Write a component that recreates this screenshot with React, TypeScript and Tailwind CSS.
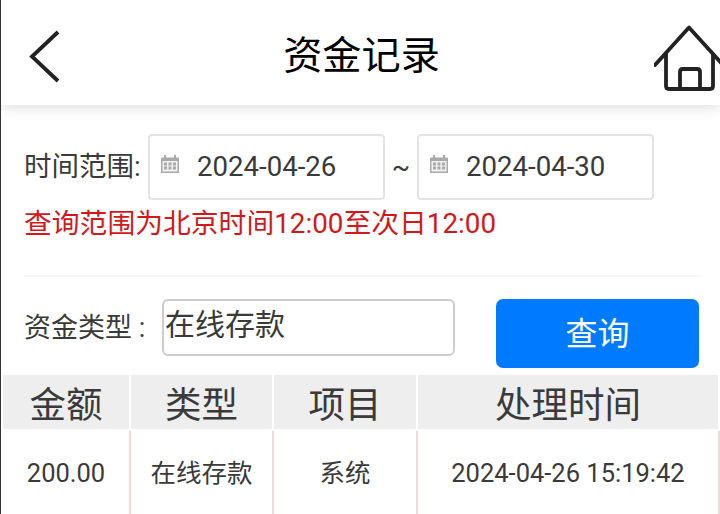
const font = "font-['Roboto','Noto_Sans_CJK_SC',sans-serif]"

function CalendarIcon() {
  return (
    <svg width="20" height="20" viewBox="0 0 20 20" className="mt-[-7px] shrink-0">
      <path d="M1 4.5a1 1 0 0 1 1-1h16a1 1 0 0 1 1 1V19H1z" fill="#aaaaaa" />
      <rect x="4" y="1" width="2" height="4" fill="#aaaaaa" />
      <rect x="14" y="1" width="2" height="4" fill="#aaaaaa" />
      <rect x="2.5" y="7" width="15" height="10.5" fill="#f1f1f1" />
      {[4, 8.5, 13].map((x) =>
        [8.5, 12.5].map((y) => <rect key={`${x}-${y}`} x={x} y={y} width="3" height="3" fill="#aaaaaa" />),
      )}
    </svg>
  )
}

function DateBox({ value }: { value: string }) {
  return (
    <div className="flex h-[66px] w-[237px] items-center rounded-[4px] border-2 border-[#e3e3e3] pl-[10px]">
      <CalendarIcon />
      <span className="ml-[17px] text-[27.6px] text-[#3a3a3a]">{value}</span>
    </div>
  )
}

const heads = ['金额', '类型', '项目', '处理时间']
const cells = ['200.00', '在线存款', '系统', '2024-04-26 15:19:42']
const cols = 'grid grid-cols-[128px_143px_144px_1fr]'

export default function App() {
  return (
    <div className={`${font} h-[514px] w-[720px] overflow-hidden border-l border-[#333333] bg-white`}>
      {/* header */}
      <header className="relative flex h-[105px] items-center justify-between bg-white shadow-[0_2px_14px_rgba(0,0,0,0.14)]">
        <svg width="40" height="60" viewBox="0 0 40 60" className="ml-[24px] mt-[13px]">
          <path d="M33 3 L7 27.5 L33 52" fill="none" stroke="#222222" strokeWidth="3.8" />
        </svg>
        <h1 className="absolute inset-x-0 top-[30px] pl-[2px] text-center text-[39.2px] leading-[52px] text-black">资金记录</h1>
        <svg width="66" height="68" viewBox="0 0 66 68" className="mt-[11px]">
          <path d="M1 41 L35 3.5 L69 41" fill="none" stroke="#222222" strokeWidth="3.8" strokeLinejoin="round" strokeLinecap="round" />
          <path d="M12 29 V62 Q12 65 15 65 H56 Q59 65 59 62 V29" fill="none" stroke="#222222" strokeWidth="3.8" />
          <path d="M26 65 V48 Q26 45 29 45 H43 Q46 45 46 48 V65" fill="none" stroke="#222222" strokeWidth="3.8" />
        </svg>
      </header>

      {/* date range */}
      <section className="ml-[23px] mr-[20px] mt-[29px] border-b-2 border-[#f6f6f6] pb-[29px]">
        <div className="flex items-center">
          <span className="w-[124px] text-[27.5px] text-[#3a3a3a]">时间范围:</span>
          <DateBox value="2024-04-26" />
          <span className="w-[32px] text-center text-[27px] text-[#3a3a3a]">~</span>
          <DateBox value="2024-04-30" />
        </div>
        <p className="mt-[2px] text-[27.8px] leading-[44px] text-[#d3181c]">查询范围为北京时间12:00至次日12:00</p>
      </section>

      {/* type filter */}
      <section className="ml-[23px] mr-[20px] mt-[22px] flex items-start">
        <span className="mt-[9px] w-[138px] text-[27px] text-[#3a3a3a]">资金类型 :</span>
        <div className="h-[57px] w-[293px] rounded-[6px] border-2 border-[#cccccc] pl-[1px] text-[30px] leading-[47px] text-[#3a3a3a]">在线存款</div>
        <button className="ml-[41px] h-[69px] w-[203px] rounded-[7px] bg-[#007bff] text-[32px] text-white">查询</button>
      </section>

      {/* records */}
      <div className={`${cols} mt-[7px] pl-[2px] text-[36.5px] leading-[62px] text-[#3a3a3a]`}>
        {heads.map((h) => (
          <div key={h} className="h-[54px] border-r-2 border-white bg-[#eeeeee] bg-clip-padding text-center">{h}</div>
        ))}
      </div>
      <div className={`${cols} mt-[2px] pl-[2px] text-[25.5px] leading-[84px] text-[#3a3a3a]`}>
        {cells.map((c) => (
          <div key={c} className="h-[84px] border-r-2 border-[#ecd9dc] text-center">{c}</div>
        ))}
      </div>
    </div>
  )
}
